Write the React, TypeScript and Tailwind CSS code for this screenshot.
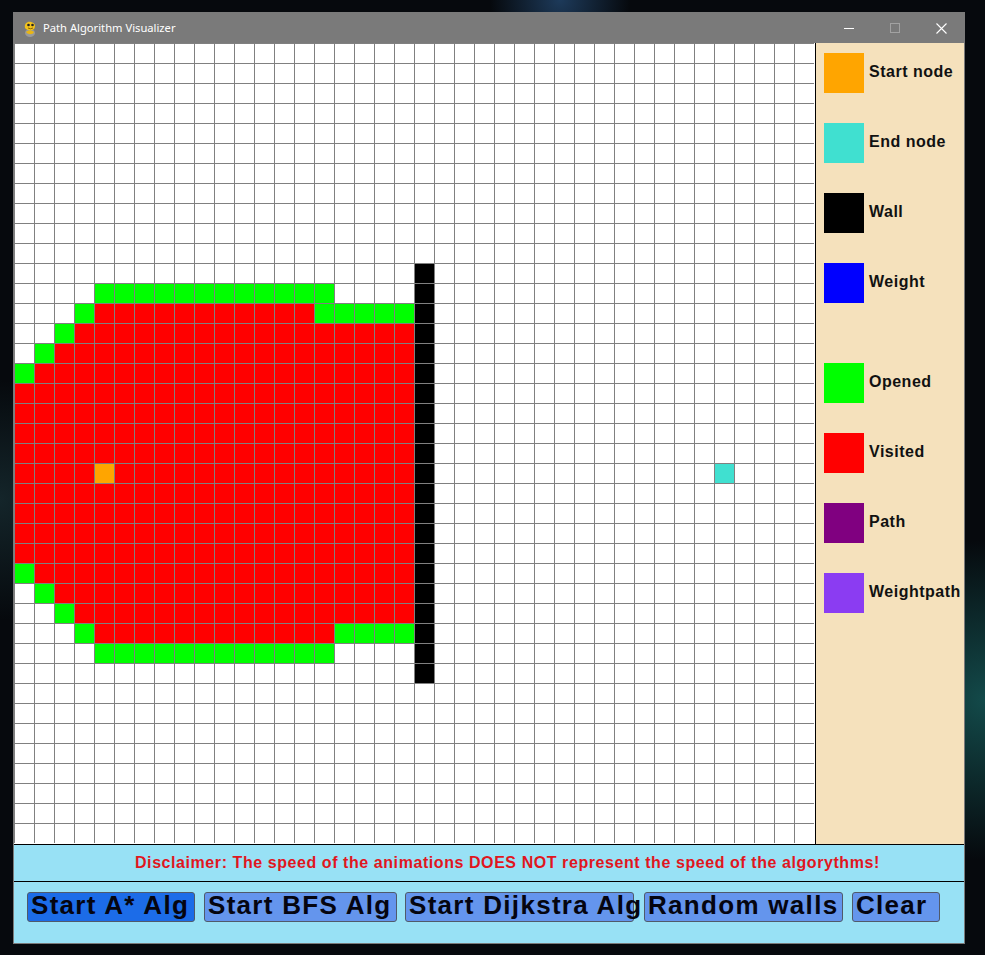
import React from 'react';

const ROWS = 40;
const COLS = 40;

// colour of each grid cell, taken from the A* snapshot
function cellClass(r: number, c: number) {
  if (r === 21 && c === 4) return 'bg-[#ffa500]';
  if (r === 21 && c === 35) return 'bg-[#40e0d0]';
  if (c === 20 && r >= 11 && r <= 31) return 'bg-black';

  const green = 'bg-[#00ff00]';
  const red = 'bg-[#ff0000]';

  if (r === 12 || r === 30) return c >= 4 && c <= 15 ? green : 'bg-white';
  if (r === 13) {
    if (c === 3) return green;
    if (c >= 4 && c <= 14) return red;
    if (c >= 15 && c <= 19) return green;
    return 'bg-white';
  }
  if (r === 29) {
    if (c === 3) return green;
    if (c >= 4 && c <= 15) return red;
    if (c >= 16 && c <= 19) return green;
    return 'bg-white';
  }
  if (r >= 14 && r <= 16) {
    const edge = 16 - r;
    if (c === edge) return green;
    if (c > edge && c <= 19) return red;
    return 'bg-white';
  }
  if (r >= 26 && r <= 28) {
    const edge = r - 26;
    if (c === edge) return green;
    if (c > edge && c <= 19) return red;
    return 'bg-white';
  }
  if (r >= 17 && r <= 25 && c <= 19) return red;
  return 'bg-white';
}

const legend = [
  { label: 'Start node', color: 'bg-[#ffa500]', gap: 'mt-[10px]' },
  { label: 'End node', color: 'bg-[#40e0d0]', gap: 'mt-[30px]' },
  { label: 'Wall', color: 'bg-black', gap: 'mt-[30px]' },
  { label: 'Weight', color: 'bg-[#0000ff]', gap: 'mt-[30px]' },
  { label: 'Opened', color: 'bg-[#00ff00]', gap: 'mt-[60px]' },
  { label: 'Visited', color: 'bg-[#ff0000]', gap: 'mt-[30px]' },
  { label: 'Path', color: 'bg-[#800080]', gap: 'mt-[30px]' },
  { label: 'Weightpath', color: 'bg-[#8b3cf2]', gap: 'mt-[30px]' },
];

const buttons = [
  { label: 'Start A* Alg', cls: 'w-[168px] ml-[13px] bg-[#1c6ce8]' },
  { label: 'Start BFS Alg', cls: 'w-[193px] ml-[9px] bg-[#6495ed]' },
  { label: 'Start Dijkstra Alg', cls: 'w-[229px] ml-[8px] bg-[#6495ed]' },
  { label: 'Random walls', cls: 'w-[199px] ml-[10px] bg-[#6495ed]' },
  { label: 'Clear', cls: 'w-[88px] ml-[9px] bg-[#6495ed]' },
];

function PygameIcon() {
  return (
    <svg width="16" height="18" viewBox="0 0 16 18">
      <ellipse cx="8" cy="13" rx="5" ry="4" fill="#9a9a9a" />
      <path d="M3 8 C2 3 6 1 9 2 C13 3 14 6 12 9 C10 11 5 11 3 8 Z" fill="#f2c21b" />
      <path d="M4 12 C6 10 10 10 12 12 C11 15 6 15 4 12 Z" fill="#e8b515" />
      <circle cx="6.5" cy="5" r="1.3" fill="#222" />
      <circle cx="10.5" cy="5" r="1.3" fill="#222" />
      <path d="M6 8 Q8.5 9.5 11 8" stroke="#6b4a00" strokeWidth="0.8" fill="none" />
    </svg>
  );
}

function App() {
  const cells = [];
  for (let r = 0; r < ROWS; r++) {
    for (let c = 0; c < COLS; c++) {
      cells.push(
        <div key={r * COLS + c} className={`w-[20px] h-[20px] border-l border-t border-[#808080] ${cellClass(r, c)}`} />
      );
    }
  }

  return (
    <div className="w-[985px] h-[955px] overflow-hidden pl-[13px] pt-[12px] bg-[#06090d] bg-[radial-gradient(circle_at_560px_0px,#1d3a5a_0px,transparent_70px),radial-gradient(circle_at_985px_700px,#134a4a_0px,transparent_160px),radial-gradient(circle_at_0px_500px,#14252a_0px,transparent_120px)]">
      <div className="w-[952px] border border-[#7a7a7a] flex flex-col">
        {/* title bar */}
        <div className="h-[30px] bg-[#7a7a7a] flex items-center text-white">
          <div className="ml-[8px] mt-[1px]">
            <PygameIcon />
          </div>
          <span className="ml-[5px] text-[11.2px] font-['Noto_Sans',sans-serif]">Path Algorithm Visualizer</span>
          <div className="ml-auto flex h-full">
            <div className="w-[46px] flex items-center justify-center">
              <div className="w-[10px] h-px bg-white" />
            </div>
            <div className="w-[46px] flex items-center justify-center">
              <div className="w-[10px] h-[10px] border border-[#a2a2a2]" />
            </div>
            <div className="w-[46px] flex items-center justify-center">
              <svg width="11" height="11" viewBox="0 0 11 11">
                <path d="M0.5 0.5 L10.5 10.5 M10.5 0.5 L0.5 10.5" stroke="white" strokeWidth="1.1" />
              </svg>
            </div>
          </div>
        </div>

        {/* grid + legend */}
        <div className="flex">
          <div className="w-[801px] h-[801px] bg-white">
            <div className="grid grid-cols-[repeat(40,20px)]">{cells}</div>
          </div>
          <div className="w-px bg-black" />
          <div className="w-[148px] bg-[#f5e1bc] flex flex-col pl-[8px] font-['Liberation_Sans',Arial,sans-serif]">
            {legend.map((item) => (
              <div key={item.label} className={`flex items-center h-[40px] ${item.gap}`}>
                <div className={`w-[40px] h-[40px] ${item.color}`} />
                <span className="ml-[5px] pb-[3px] text-[16px] font-bold tracking-[0.5px] text-[#111] whitespace-nowrap">
                  {item.label}
                </span>
              </div>
            ))}
          </div>
        </div>
        <div className="h-px bg-black" />

        {/* bottom panel */}
        <div className="bg-[#98e1f5] font-['Liberation_Sans',Arial,sans-serif]">
          <div className="h-[36px] pl-[121px] text-[16px] leading-[36px] font-bold tracking-[0.57px] text-[#e0161e] whitespace-nowrap">
            Disclaimer: The speed of the animations DOES NOT represent the speed of the algorythms!
          </div>
          <div className="h-px bg-black" />
          <div className="h-[61px] pt-[10px] flex items-start">
            {buttons.map((b) => (
              <div
                key={b.label}
                className={`h-[30px] rounded-[3px] border border-[#505a6a] flex items-center pl-[3px] pb-[5px] ${b.cls}`}
              >
                <span className="text-[26px] leading-[26px] font-bold tracking-[1.3px] text-[#050510] whitespace-nowrap">
                  {b.label}
                </span>
              </div>
            ))}
          </div>
        </div>
      </div>
    </div>
  );
}

export default App;
